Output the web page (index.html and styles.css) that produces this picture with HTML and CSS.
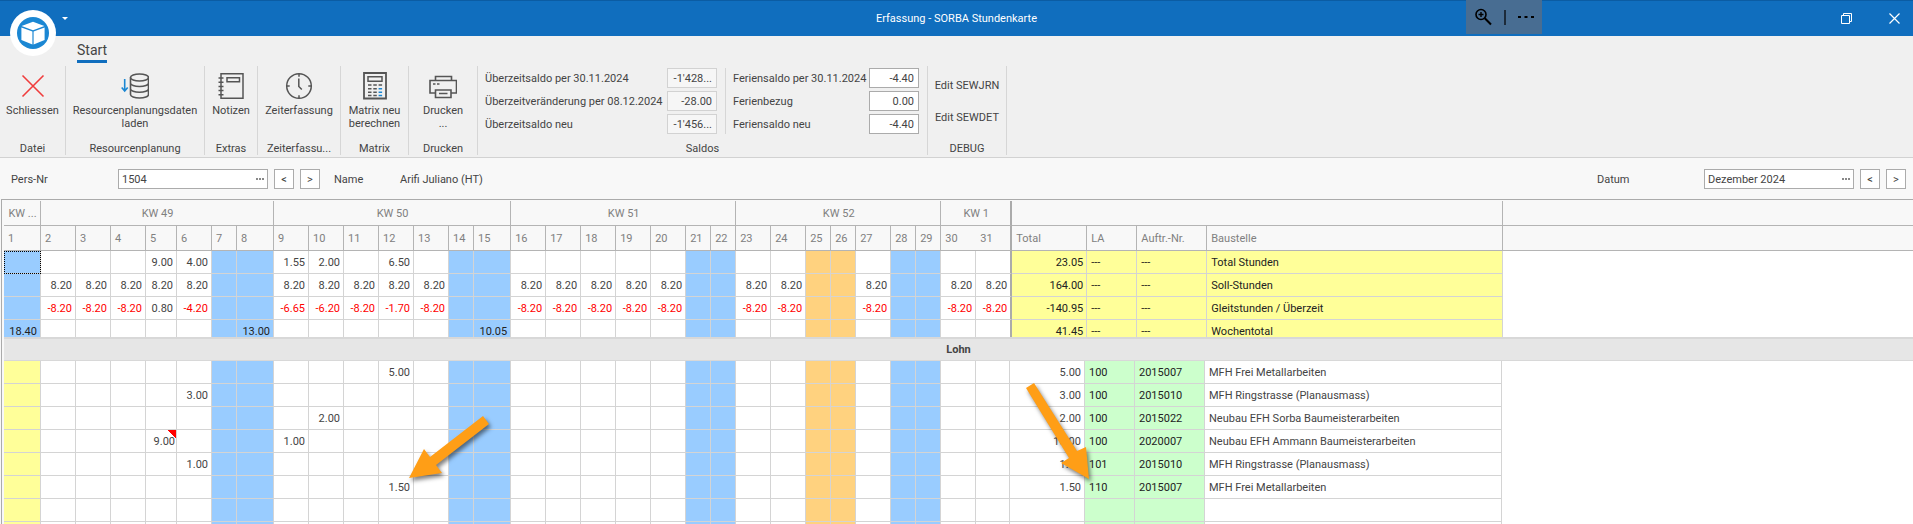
FILE: index.html
```html
<!DOCTYPE html>
<html lang="de">
<head>
    <meta charset="UTF-8">
    <meta name="viewport" content="width=device-width, initial-scale=1.0">
    <title>Erfassung - SORBA Stundenkarte</title>
    <link rel="stylesheet" href="styles.css">
</head>
<body>
    <header class="titlebar">
        <button class="app-logo" aria-label="Menü">
            <svg width="46" height="46" viewBox="0 0 46 46">
                <circle cx="23" cy="23" r="23" fill="#fff"/>
                <circle cx="23" cy="23" r="16" fill="#1b87d3"/>
                <path d="M23 11.8 34.4 16 23 20.2 11.6 16z" fill="#fff"/>
                <path d="M11.4 17.6 22.4 21.4V34.4L11.4 30z M34.6 17.6 23.6 21.4V34.4L34.6 30z" fill="#fff"/>
            </svg>
        </button>
        <button class="quick-menu" aria-label="Schnellzugriff">
            <svg width="6" height="3" viewBox="0 0 6 3"><path d="M0 0h6L3 3z" fill="#fff"/></svg>
        </button>
        <h1>Erfassung - SORBA Stundenkarte</h1>
        <div class="zoom-bar">
            <button aria-label="Vergrössern">
                <svg width="18" height="18" viewBox="0 0 18 18" fill="none" stroke="#000">
                    <circle cx="7" cy="6.5" r="5" stroke-width="1.6"/>
                    <path d="M10.8 10.3 17 16.5" stroke-width="2"/>
                    <path d="M4.5 6.5h5M7 4v5" stroke-width="1.4"/>
                </svg>
            </button>
            <span class="divider"></span>
            <button aria-label="Mehr">
                <svg width="16" height="3" viewBox="0 0 16 3"><path d="M0 0h3v2H0zM6.5 0h3v2h-3zM13 0h3v2h-3z"/></svg>
            </button>
        </div>
        <div class="window-buttons">
            <button aria-label="Verkleinern">
                <svg width="11" height="11" viewBox="0 0 11 11" fill="none" stroke="#fff">
                    <path d="M.5 2.5h8v8h-8zM2.5 2.5v-2h8v8h-2"/>
                </svg>
            </button>
            <button aria-label="Fenster schliessen">
                <svg width="11" height="11" viewBox="0 0 11 11" stroke="#fff" stroke-width="1.2"><path d="M.5.5l10 10M10.5.5l-10 10"/></svg>
            </button>
        </div>
    </header>

    <nav class="tabs"><a class="tab" href="#start">Start</a></nav>

    <section class="ribbon" id="start">
        <div class="group datei">
            <button class="tool">
                <svg width="28" height="28" viewBox="0 0 28 28" stroke="#f03c3c" stroke-width="1.6"><path d="M3.5 3.5l21 21M24.5 3.5l-21 21"/></svg>
                <span>Schliessen</span>
            </button>
            <h2>Datei</h2>
        </div>
        <div class="group planung">
            <button class="tool">
                <svg width="28" height="28" viewBox="0 0 28 28" fill="none" stroke="#555" stroke-width="1.6">
                    <ellipse cx="18.5" cy="5.5" rx="9" ry="3.5"/>
                    <path d="M9.5 5.5v17c0 2 4 3.5 9 3.5s9-1.5 9-3.5v-17M9.5 11c0 2 4 3.5 9 3.5s9-1.5 9-3.5M9.5 16.7c0 2 4 3.5 9 3.5s9-1.5 9-3.5"/>
                    <path d="M3.7 7v11.5M.7 15.5l3 3.5 3-3.5" stroke="#1b87d3"/>
                </svg>
                <span>Resourcenplanungsdaten<br>laden</span>
            </button>
            <h2>Resourcenplanung</h2>
        </div>
        <div class="group extras">
            <button class="tool">
                <svg width="28" height="28" viewBox="0 0 28 28" fill="none" stroke="#555" stroke-width="1.5">
                    <path d="M4 1.8h22v24.5H4zM10 5.8h12.5v4H10z"/>
                    <path d="M1.500 6h5M1.500 10.200h5M1.500 14.400h5M1.500 18.600h5M1.500 22.800h5"/>
                </svg>
                <span>Notizen</span>
            </button>
            <h2>Extras</h2>
        </div>
        <div class="group zeit">
            <button class="tool">
                <svg width="28" height="28" viewBox="0 0 28 28" fill="none" stroke="#555" stroke-width="1.5">
                    <circle cx="14" cy="14" r="12.3"/>
                    <path d="M14 1.7v3M14 23.3v3M1.7 14h3M23.3 14h3M13.8 6.5v8l3 3"/>
                </svg>
                <span>Zeiterfassung</span>
            </button>
            <h2>Zeiterfassu...</h2>
        </div>
        <div class="group matrix">
            <button class="tool">
                <svg width="28" height="28" viewBox="0 0 28 28" fill="none" stroke="#555" stroke-width="1.5">
                    <path d="M3 1h22v25.5H3z" stroke-width="1.8"/>
                    <path d="M7 4.8h14v4.5H7z"/>
                    <path d="M7 13h3.5M12.3 13h3.5M7 16.7h3.5M12.3 16.7h3.5M7 20.2h3.5M12.3 20.2h3.5M7 23.5h3.5M12.3 23.5h3.5M17.6 13h3.5" stroke-width="1.4"/>
                    <path d="M17.6 16.7h3.5M17.6 20.2h3.5M17.6 23.5h3.5" stroke="#1b87d3"/>
                </svg>
                <span>Matrix neu<br>berechnen</span>
            </button>
            <h2>Matrix</h2>
        </div>
        <div class="group drucken">
            <button class="tool">
                <svg width="28" height="28" viewBox="0 0 28 28" fill="none" stroke="#555" stroke-width="1.6">
                    <path d="M6.5 8.5v-4h16v4M6.500 21H1V8.500h26.500V21H22"/>
                    <path d="M6.500 18h15.500v7.500H6.500zM10 21.500h8.500M4 12h2.500M8 12h2.500"/>
                </svg>
                <span>Drucken<br>...</span>
            </button>
            <h2>Drucken</h2>
        </div>
        <div class="group saldos">
            <div class="fields">
                <div class="field-list overtime">
                    <label for="ueber-alt">Überzeitsaldo per 30.11.2024</label>
                    <input id="ueber-alt" value="-1'428..." readonly>
                    <label for="ueber-diff">Überzeitveränderung per 08.12.2024</label>
                    <input id="ueber-diff" value="-28.00" readonly>
                    <label for="ueber-neu">Überzeitsaldo neu</label>
                    <input id="ueber-neu" value="-1'456..." readonly>
                </div>
                <div class="field-list holidays">
                    <label for="ferien-alt">Feriensaldo per 30.11.2024</label>
                    <input id="ferien-alt" value="-4.40">
                    <label for="ferien-bezug">Ferienbezug</label>
                    <input id="ferien-bezug" value="0.00">
                    <label for="ferien-neu">Feriensaldo neu</label>
                    <input id="ferien-neu" value="-4.40">
                </div>
            </div>
            <h2>Saldos</h2>
        </div>
        <div class="group debug">
            <div class="links">
                <button>Edit SEWJRN</button>
                <button>Edit SEWDET</button>
            </div>
            <h2>DEBUG</h2>
        </div>
    </section>

    <form class="filter">
        <label class="pers-label" for="persnr">Pers-Nr</label>
        <span class="picker"><input id="persnr" value="1504"><button type="button" aria-label="Person suchen"><i></i><i></i><i></i></button></span>
        <button type="button" class="step" aria-label="Vorherige Person">&lt;</button>
        <button type="button" class="step" aria-label="Nächste Person">&gt;</button>
        <span class="name-label">Name</span>
        <span>Arifi Juliano (HT)</span>
        <label class="datum-label" for="datum">Datum</label>
        <span class="picker datum"><input id="datum" value="Dezember 2024"><button type="button" aria-label="Monat suchen"><i></i><i></i><i></i></button></span>
        <button type="button" class="step" aria-label="Vorheriger Monat">&lt;</button>
        <button type="button" class="step" aria-label="Nächster Monat">&gt;</button>
    </form>

    <main class="card">
        <div class="summary">
            <table id="summary"></table>
        </div>
        <h3 class="band">Lohn</h3>
        <div class="detail">
            <table id="detail"></table>
            <svg class="arrow arrow-left" width="90" height="75" viewBox="0 0 90 75">
                <path d="M78 8 84 16 31 57 37 65 4 70 19 41 25 49z"/>
            </svg>
            <svg class="arrow arrow-right" width="76" height="108" viewBox="0 0 76 108">
                <path d="M4 8 12 3 55 71 64 67 67 99 39 83 47 78z"/>
            </svg>
        </div>
    </main>
    <script src="script.js"></script>
</body>
</html>
```
FILE: styles.css
```css
* {
    box-sizing: border-box;
}
body {
    margin: 0;
    height: 100vh;
    display: flex;
    flex-direction: column;
    overflow: hidden;
    background: #f8f8f8;
    color: #444;
    font: 11px/13px Roboto, sans-serif;
}
h1, h2, h3 {
    margin: 0;
    font-size: 11px;
    font-weight: normal;
}
button, input {
    font: inherit;
    color: inherit;
    padding: 0;
    border: none;
    background: none;
}

/* title bar */
.titlebar {
    position: relative;
    flex: none;
    height: 36px;
    display: flex;
    align-items: center;
    background: #106ebe;
    border-top: 1px solid #0b5ca3;
    color: #fff;
}
.titlebar h1 {
    flex: 1;
    text-align: center;
}
.titlebar svg {
    display: block;
}
.app-logo {
    position: absolute;
    left: 10px;
    top: 9px;
}
.quick-menu {
    position: absolute;
    left: 62px;
    top: 16px;
}
.zoom-bar {
    position: absolute;
    right: 371px;
    top: -1px;
    width: 76px;
    height: 34px;
    padding: 0 8px;
    display: flex;
    align-items: center;
    justify-content: space-between;
    background: #486d92;
}
.divider {
    width: 2px;
    height: 15px;
    background: #1d2b3a;
}
.window-buttons {
    position: absolute;
    right: 13px;
    top: 12px;
    display: flex;
    gap: 37px;
}

/* ribbon */
.tabs {
    flex: none;
    height: 30px;
    padding: 5px 77px 0;
    background: #f0f0f0;
}
.tab {
    display: inline-block;
    padding: 1px 0;
    border-bottom: 3px solid #106ebe;
    color: #444;
    font-size: 14px;
    line-height: 17px;
    text-decoration: none;
}
.ribbon {
    flex: none;
    height: 92px;
    padding-bottom: 2px;
    display: flex;
    background: #f0f0f0;
    border-bottom: 1px solid #d2d2d2;
}
.group {
    display: flex;
    flex-direction: column;
    justify-content: space-between;
    border-right: 1px solid #d6d6d6;
    text-align: center;
}
.group h2 {
    line-height: 13px;
    white-space: nowrap;
}
.datei { width: 66px; }
.planung { width: 139px; }
.extras { width: 53px; }
.zeit { width: 83px; }
.matrix { width: 68px; }
.drucken { width: 69px; }
.saldos { width: 450px; }
.debug { width: 79px; }
.tool {
    padding-top: 6px;
    display: flex;
    flex-direction: column;
    align-items: center;
    gap: 4px;
    white-space: nowrap;
}
.fields {
    display: flex;
    padding-top: 2px;
}
.field-list {
    display: grid;
    grid-template-columns: 1fr 50px;
    grid-auto-rows: 20px;
    row-gap: 3px;
    align-items: center;
    text-align: left;
}
.overtime {
    width: 248px;
    padding: 0 8px 0 7px;
    border-right: 1px solid #d6d6d6;
}
.holidays {
    width: 201px;
    padding: 0 8px 0 7px;
}
.field-list input {
    width: 50px;
    height: 20px;
    padding: 0 4px;
    background: #fff;
    border: 1px solid #ababab;
    text-align: right;
}
.overtime input {
    background: #f6f6f6;
    border-color: #d2d2d2;
}
.links {
    padding-top: 13px;
    display: grid;
    gap: 19px;
}

/* filter row */
.filter {
    flex: none;
    height: 41px;
    padding: 1px 7px 0 11px;
    display: flex;
    align-items: center;
    gap: 6px;
}
.pers-label {
    width: 101px;
}
.picker {
    width: 150px;
    height: 20px;
    display: flex;
    background: #fff;
    border: 1px solid #ababab;
}
.picker input {
    flex: 1;
    min-width: 0;
    padding-left: 3px;
}
.picker button {
    width: 15px;
    display: flex;
    align-items: center;
    justify-content: center;
    gap: 1px;
}
.picker i {
    width: 2px;
    height: 2px;
    background: #888;
}
.step {
    width: 20px;
    height: 20px;
    background: #fff;
    border: 1px solid #ababab;
}
.name-label {
    width: 60px;
    margin-left: 8px;
}
.datum-label {
    width: 101px;
    margin-left: auto;
}

/* time card */
.card {
    flex: 1;
    min-height: 0;
    margin-left: 1px;
    border: 1px solid #ababab;
    border-width: 1px 0 0 1px;
    padding: 1px 0 0 2px;
    overflow: hidden;
}
table {
    width: 100%;
    table-layout: fixed;
    border-collapse: separate;
    border-spacing: 0;
}
th {
    height: 25px;
    padding: 1px 3px 0 4px;
    border-right: 1px solid #b4b4b4;
    border-bottom: 1px solid #b4b4b4;
    color: #808080;
    font-weight: normal;
    text-align: left;
    white-space: nowrap;
}
th.week {
    text-align: center;
}
th:last-child, th.joined {
    border-right: none;
}
td {
    height: 23px;
    padding: 1px 3px 0;
    background: #fff;
    border-right: 1px solid #d4d4d4;
    border-bottom: 1px solid #d4d4d4;
    text-align: right;
    white-space: nowrap;
}
td.weekend { background: #99ccff; color: #222; }
td.holiday { background: #ffd27f; }
td.sum { background: #ffff99; color: #222; }
td.open { background: #ffff99; }
td.code { background: #ccffcc; color: #222; }
td.minus { color: #ff0000; }
td.text { padding-left: 4px; text-align: left; }
td.rest { border: none; }
td.focus { outline: 1px dotted #000; outline-offset: -1px; }
td.note {
    padding-right: 1px;
    background: linear-gradient(225deg, #ff0000 6px, #fff 6px);
}
.summary {
    height: 136px;
    overflow: hidden;
}
.summary .edge {
    border-right: 2px solid #ababab;
}
.band {
    height: 24px;
    background: #e6e6e6;
    border-top: 2px solid #d8d8d8;
    border-bottom: 1px solid #d8d8d8;
    font-weight: bold;
    line-height: 21px;
    text-align: center;
}
.detail {
    position: relative;
}
.detail td {
    padding-top: 0;
}
.arrow {
    position: absolute;
    fill: #ff9e16;
    filter: drop-shadow(2px 3px 2px rgba(0, 0, 0, 0.5));
}
.arrow-left {
    left: 401px;
    top: 47px;
}
.arrow-right {
    left: 1018px;
    top: 19px;
}
```
FILE: script.js
```js
const dayWidths = [37, 35, 35, 35, 31, 35, 25, 37, 35, 35, 35, 35, 35, 25, 37, 35, 35, 35, 35, 35, 25, 25, 35, 35, 25, 25, 35, 25, 25, 35];
const weekend = [1, 7, 8, 14, 15, 21, 22, 28, 29];
const holiday = [25, 26];
const weeks = [['KW ...', 1], ['KW 49', 7], ['KW 50', 7], ['KW 51', 7], ['KW 52', 7], ['KW 1', 2]];

const soll = {};
const gleit = { 5: '0.80', 6: '-4.20', 9: '-6.65', 10: '-6.20', 12: '-1.70' };
for (let d = 1; d <= 31; d++) {
    if (weekend.includes(d) || holiday.includes(d)) continue;
    soll[d] = '8.20';
    gleit[d] = gleit[d] || '-8.20';
}

const summaryRows = [
    [{ 5: '9.00', 6: '4.00', 9: '1.55', 10: '2.00', 12: '6.50' }, '23.05', 'Total Stunden'],
    [soll, '164.00', 'Soll-Stunden'],
    [gleit, '-140.95', 'Gleitstunden / Überzeit'],
    [{ 1: '18.40', 8: '13.00', 15: '10.05' }, '41.45', 'Wochentotal']
];

const detailRows = [
    [{ 12: '5.00' }, '5.00', '100', '2015007', 'MFH Frei Metallarbeiten'],
    [{ 6: '3.00' }, '3.00', '100', '2015010', 'MFH Ringstrasse (Planausmass)'],
    [{ 10: '2.00' }, '2.00', '100', '2015022', 'Neubau EFH Sorba Baumeisterarbeiten'],
    [{ 5: '9.00', 9: '1.00' }, '10.00', '100', '2020007', 'Neubau EFH Ammann Baumeisterarbeiten'],
    [{ 6: '1.00' }, '1.00', '101', '2015010', 'MFH Ringstrasse (Planausmass)'],
    [{ 12: '1.50' }, '1.50', '110', '2015007', 'MFH Frei Metallarbeiten'],
    [{}, '', '', '', ''],
    [{}, '', '', '', '']
];

function columns(widths) {
    return '<colgroup>' + dayWidths.concat(widths).map(w => `<col style="width: ${w}px">`).join('') + '<col></colgroup>';
}

function dayCells(values, firstClass) {
    let html = '';
    for (let d = 1; d <= 31; d++) {
        const value = values[d] || '';
        const cls = [];
        if (d === 1) cls.push(firstClass);
        else if (weekend.includes(d)) cls.push('weekend');
        if (holiday.includes(d)) cls.push('holiday');
        if (value.startsWith('-')) cls.push('minus');
        if (d === 31) cls.push('edge');
        html += `<td class="${cls.join(' ')}">${value}</td>`;
    }
    return html;
}

// upper table: header and totals
let html = columns([36, 75, 50, 70, 296]) + '<thead><tr>';
weeks.forEach(([label, span], i) => {
    html += `<th class="week${i === 5 ? ' edge' : ''}" colspan="${span}">${label}</th>`;
});
html += '<th colspan="4"></th><th></th></tr><tr>';
for (let d = 1; d <= 31; d++) {
    html += `<th class="${d === 30 ? 'joined' : d === 31 ? 'edge' : ''}">${d}</th>`;
}
html += '<th>Total</th><th>LA</th><th>Auftr.-Nr.</th><th>Baustelle</th><th></th></tr></thead><tbody>';
summaryRows.forEach(([days, total, text]) => {
    html += `<tr>${dayCells(days, 'weekend')}<td class="sum">${total}</td><td class="sum text">---</td><td class="sum text">---</td><td class="sum text">${text}</td><td class="rest"></td></tr>`;
});
document.getElementById('summary').innerHTML = html + '</tbody>';
document.querySelector('#summary td').classList.add('focus');

// lower table: one row per wage entry
html = columns([34, 75, 50, 70, 297]) + '<tbody>';
detailRows.forEach(([days, total, la, nr, text]) => {
    html += `<tr>${dayCells(days, 'open')}<td>${total}</td><td class="code text">${la}</td><td class="code text">${nr}</td><td class="text">${text}</td><td class="rest"></td></tr>`;
});
document.getElementById('detail').innerHTML = html + '</tbody>';
document.querySelector('#detail tr:nth-child(4) td:nth-child(5)').classList.add('note');
```
